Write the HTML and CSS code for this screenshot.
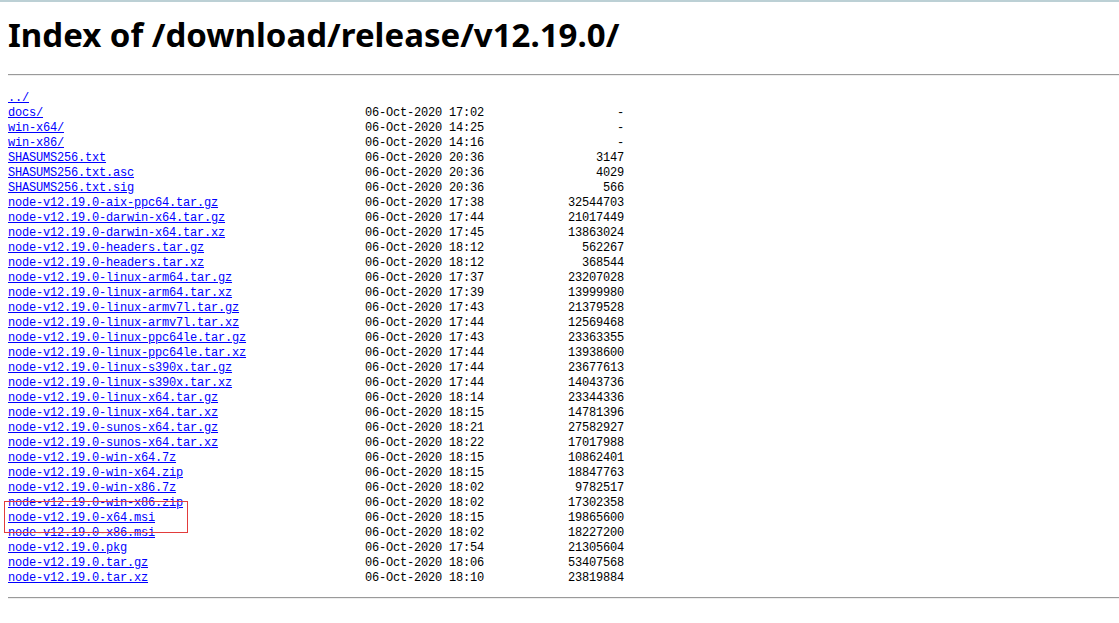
FILE: index.html
```html
<!DOCTYPE html>
<html>
<head>
<meta charset="utf-8">
<title>Index of /download/release/v12.19.0/</title>
<link rel="stylesheet" href="styles.css">
</head>
<body>
<div class="topbar"></div>
<main class="page">
  <h1 class="title">Index of /download/release/v12.19.0/</h1>
  <hr class="rule">
  <div class="listing">
    <div class="row"><a href="#">../</a></div>
    <div class="row"><a href="#">docs/</a><span>06-Oct-2020 17:02</span><span class="size">-</span></div>
    <div class="row"><a href="#">win-x64/</a><span>06-Oct-2020 14:25</span><span class="size">-</span></div>
    <div class="row"><a href="#">win-x86/</a><span>06-Oct-2020 14:16</span><span class="size">-</span></div>
    <div class="row"><a href="#">SHASUMS256.txt</a><span>06-Oct-2020 20:36</span><span class="size">3147</span></div>
    <div class="row"><a href="#">SHASUMS256.txt.asc</a><span>06-Oct-2020 20:36</span><span class="size">4029</span></div>
    <div class="row"><a href="#">SHASUMS256.txt.sig</a><span>06-Oct-2020 20:36</span><span class="size">566</span></div>
    <div class="row"><a href="#">node-v12.19.0-aix-ppc64.tar.gz</a><span>06-Oct-2020 17:38</span><span class="size">32544703</span></div>
    <div class="row"><a href="#">node-v12.19.0-darwin-x64.tar.gz</a><span>06-Oct-2020 17:44</span><span class="size">21017449</span></div>
    <div class="row"><a href="#">node-v12.19.0-darwin-x64.tar.xz</a><span>06-Oct-2020 17:45</span><span class="size">13863024</span></div>
    <div class="row"><a href="#">node-v12.19.0-headers.tar.gz</a><span>06-Oct-2020 18:12</span><span class="size">562267</span></div>
    <div class="row"><a href="#">node-v12.19.0-headers.tar.xz</a><span>06-Oct-2020 18:12</span><span class="size">368544</span></div>
    <div class="row"><a href="#">node-v12.19.0-linux-arm64.tar.gz</a><span>06-Oct-2020 17:37</span><span class="size">23207028</span></div>
    <div class="row"><a href="#">node-v12.19.0-linux-arm64.tar.xz</a><span>06-Oct-2020 17:39</span><span class="size">13999980</span></div>
    <div class="row"><a href="#">node-v12.19.0-linux-armv7l.tar.gz</a><span>06-Oct-2020 17:43</span><span class="size">21379528</span></div>
    <div class="row"><a href="#">node-v12.19.0-linux-armv7l.tar.xz</a><span>06-Oct-2020 17:44</span><span class="size">12569468</span></div>
    <div class="row"><a href="#">node-v12.19.0-linux-ppc64le.tar.gz</a><span>06-Oct-2020 17:43</span><span class="size">23363355</span></div>
    <div class="row"><a href="#">node-v12.19.0-linux-ppc64le.tar.xz</a><span>06-Oct-2020 17:44</span><span class="size">13938600</span></div>
    <div class="row"><a href="#">node-v12.19.0-linux-s390x.tar.gz</a><span>06-Oct-2020 17:44</span><span class="size">23677613</span></div>
    <div class="row"><a href="#">node-v12.19.0-linux-s390x.tar.xz</a><span>06-Oct-2020 17:44</span><span class="size">14043736</span></div>
    <div class="row"><a href="#">node-v12.19.0-linux-x64.tar.gz</a><span>06-Oct-2020 18:14</span><span class="size">23344336</span></div>
    <div class="row"><a href="#">node-v12.19.0-linux-x64.tar.xz</a><span>06-Oct-2020 18:15</span><span class="size">14781396</span></div>
    <div class="row"><a href="#">node-v12.19.0-sunos-x64.tar.gz</a><span>06-Oct-2020 18:21</span><span class="size">27582927</span></div>
    <div class="row"><a href="#">node-v12.19.0-sunos-x64.tar.xz</a><span>06-Oct-2020 18:22</span><span class="size">17017988</span></div>
    <div class="row"><a href="#">node-v12.19.0-win-x64.7z</a><span>06-Oct-2020 18:15</span><span class="size">10862401</span></div>
    <div class="row"><a href="#">node-v12.19.0-win-x64.zip</a><span>06-Oct-2020 18:15</span><span class="size">18847763</span></div>
    <div class="row"><a href="#">node-v12.19.0-win-x86.7z</a><span>06-Oct-2020 18:02</span><span class="size">9782517</span></div>
    <div class="row"><a href="#">node-v12.19.0-win-x86.zip</a><span>06-Oct-2020 18:02</span><span class="size">17302358</span></div>
    <div class="row row-marked"><a href="#">node-v12.19.0-x64.msi</a><span>06-Oct-2020 18:15</span><span class="size">19865600</span></div>
    <div class="row"><a href="#">node-v12.19.0-x86.msi</a><span>06-Oct-2020 18:02</span><span class="size">18227200</span></div>
    <div class="row"><a href="#">node-v12.19.0.pkg</a><span>06-Oct-2020 17:54</span><span class="size">21305604</span></div>
    <div class="row"><a href="#">node-v12.19.0.tar.gz</a><span>06-Oct-2020 18:06</span><span class="size">53407568</span></div>
    <div class="row"><a href="#">node-v12.19.0.tar.xz</a><span>06-Oct-2020 18:10</span><span class="size">23819884</span></div>
  </div>
  <hr class="rule">
</main>
</body>
</html>
```

FILE: styles.css
```css
html, body {
  margin: 0;
  padding: 0;
  background: #ffffff;
}

.topbar {
  height: 2px;
  background: #bcd0d5;
}

.page {
  padding: 0 0 0 8px;
}

.title {
  margin: 0;
  padding-top: 11px;
  height: 72px;
  box-sizing: border-box;
  font-family: "Noto Sans", "Open Sans", sans-serif;
  font-weight: 700;
  font-size: 33px;
  line-height: 44px;
  color: #000;
}

.rule {
  margin: 0;
  height: 0;
  border: 0;
  border-top: 1px solid #9a9a9a;
  border-bottom: 1px solid #eeeeee;
}

.listing {
  padding: 15px 0 11px 0;
  font-family: "Liberation Mono", "DejaVu Sans Mono", monospace;
  font-size: 12px;
  letter-spacing: -0.2px;
  line-height: 15px;
  color: #000;
}

.row {
  display: grid;
  grid-template-columns: 357px 119px 140px;
  height: 15px;
  white-space: pre;
}

.row a {
  color: #0000ff;
  text-decoration: underline;
}

.size {
  text-align: right;
}

.row-marked {
  position: relative;
}

.row-marked::after {
  content: "";
  position: absolute;
  left: -4px;
  top: -10px;
  width: 182px;
  height: 30px;
  border: 1px solid #e23b3b;
  pointer-events: none;
}
```
